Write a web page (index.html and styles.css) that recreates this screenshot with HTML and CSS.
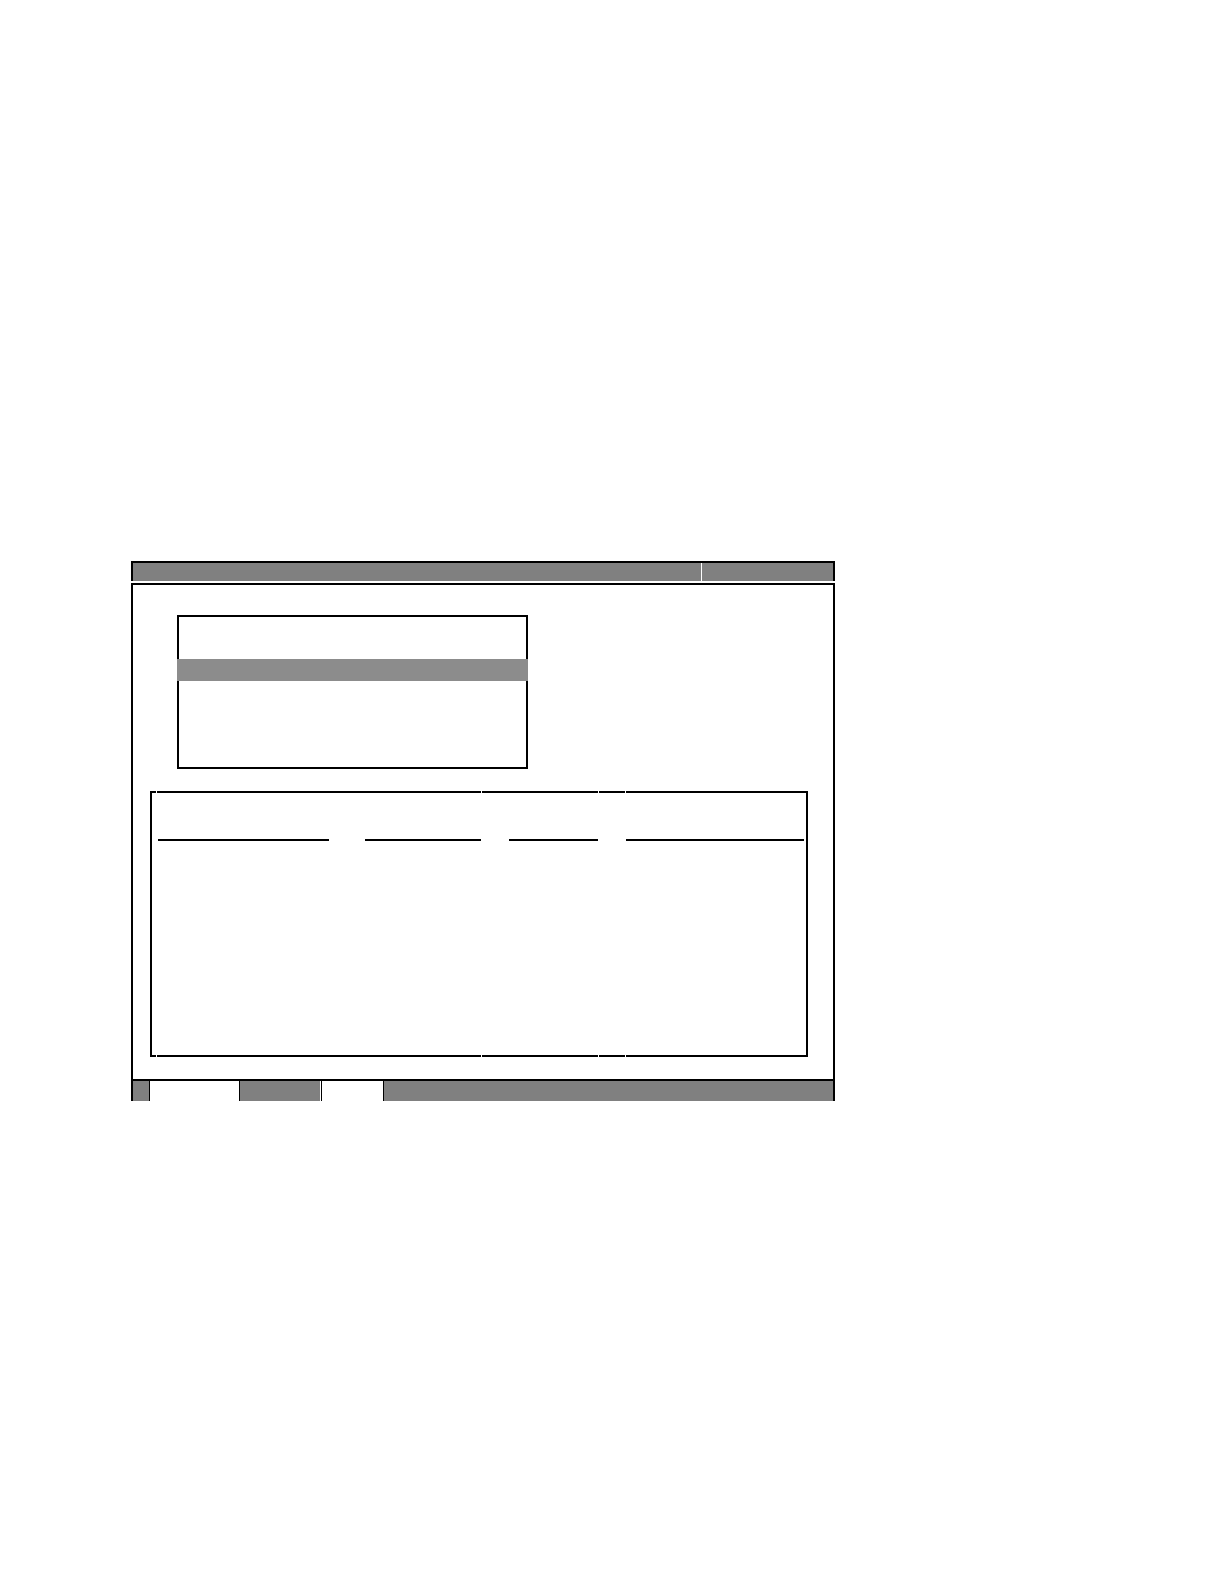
FILE: index.html
```html
<!DOCTYPE html>
<html lang="en">
<head>
<meta charset="utf-8">
<title>Window</title>
<link rel="stylesheet" href="styles.css">
</head>
<body>
<div class="page">
  <div class="window">
    <div class="titlebar">
      <div class="title-main"></div>
      <div class="title-side"></div>
    </div>
    <div class="win-body">
      <div class="listbox">
        <div class="row"></div>
        <div class="row"></div>
        <div class="row selected"></div>
        <div class="row"></div>
        <div class="row"></div>
        <div class="row"></div>
      </div>
      <div class="table">
        <div class="rule">
          <span class="seg s1"></span>
          <span class="seg s2"></span>
          <span class="seg s3"></span>
          <span class="seg s4"></span>
          <span class="seg s5"></span>
        </div>
        <div class="table-body">
          <div class="header">
            <span class="uline c2"></span>
            <span class="uline c4"></span>
            <span class="uline c6"></span>
            <span class="uline c8"></span>
          </div>
        </div>
        <div class="rule">
          <span class="seg s1"></span>
          <span class="seg s2"></span>
          <span class="seg s3"></span>
          <span class="seg s4"></span>
          <span class="seg s5"></span>
        </div>
      </div>
    </div>
    <div class="statusbar">
      <div class="sb sb-a"></div>
      <div class="sb sb-b"></div>
      <div class="sb sb-c"></div>
      <div class="sb sb-gap"></div>
      <div class="sb sb-d"></div>
      <div class="sb sb-e"></div>
    </div>
  </div>
</div>
</body>
</html>
```
FILE: styles.css
```css
html, body {
  margin: 0;
  padding: 0;
  background: #ffffff;
  font-family: "Liberation Sans", Arial, sans-serif;
}

.page {
  width: 1224px;
  height: 1584px;
  box-sizing: border-box;
  padding: 561px 0 0 131px;
}

.window {
  width: 704px;
}

.titlebar {
  display: flex;
  height: 20px;
  box-sizing: border-box;
  border-top: 2px solid #000;
  border-left: 2px solid #000;
  border-right: 2px solid #000;
  background: #808080;
  margin-bottom: 2px;
}

.title-main {
  flex: 1;
}

.title-side {
  width: 131px;
  border-left: 1px solid #ffffff;
}

.win-body {
  height: 496px;
  box-sizing: border-box;
  border-top: 2px solid #000;
  border-left: 2px solid #000;
  border-right: 2px solid #000;
  padding-top: 30px;
  background: #fff;
}

.listbox {
  width: 351px;
  height: 154px;
  box-sizing: border-box;
  border: 2px solid #000;
  margin-left: 44px;
}

.row {
  height: 21px;
}

.row.selected {
  height: 22px;
  margin: 0 -2px;
  background: #8c8c8c;
}

.table {
  width: 658px;
  height: 266px;
  margin-top: 22px;
  margin-left: 17px;
  display: flex;
  flex-direction: column;
}

.rule {
  display: flex;
  gap: 1px;
  height: 2px;
}

.seg {
  display: block;
  height: 2px;
  background: #000;
}

.s1 { width: 6px; }
.s2 { width: 324px; }
.s3 { width: 116px; }
.s4 { width: 26px; }
.s5 { flex: 1; }

.table-body {
  flex: 1;
  border-left: 2px solid #000;
  border-right: 2px solid #000;
}

.header {
  display: grid;
  grid-template-columns: 6px 171px 36px 116px 28px 89px 28px 178px 2px;
  padding-top: 46px;
}

.uline {
  display: block;
  height: 2px;
  background: #000;
}

.c2 { grid-column: 2; }
.c4 { grid-column: 4; }
.c6 { grid-column: 6; }
.c8 { grid-column: 8; }

.statusbar {
  display: flex;
  height: 22px;
  box-sizing: border-box;
  border-top: 2px solid #000;
  border-left: 2px solid #000;
  border-right: 2px solid #000;
  background: #808080;
}

.sb {
  height: 100%;
}

.sb-a {
  width: 16px;
}

.sb-b {
  width: 89px;
  border-left: 1px solid #000;
  background: #fff;
}

.sb-c {
  width: 80px;
  border-left: 1px solid #000;
}

.sb-gap {
  width: 1px;
  background: #fff;
}

.sb-d {
  width: 61px;
  border-left: 1px solid #000;
  background: #fff;
}

.sb-e {
  flex: 1;
  border-left: 1px solid #000;
}
```
